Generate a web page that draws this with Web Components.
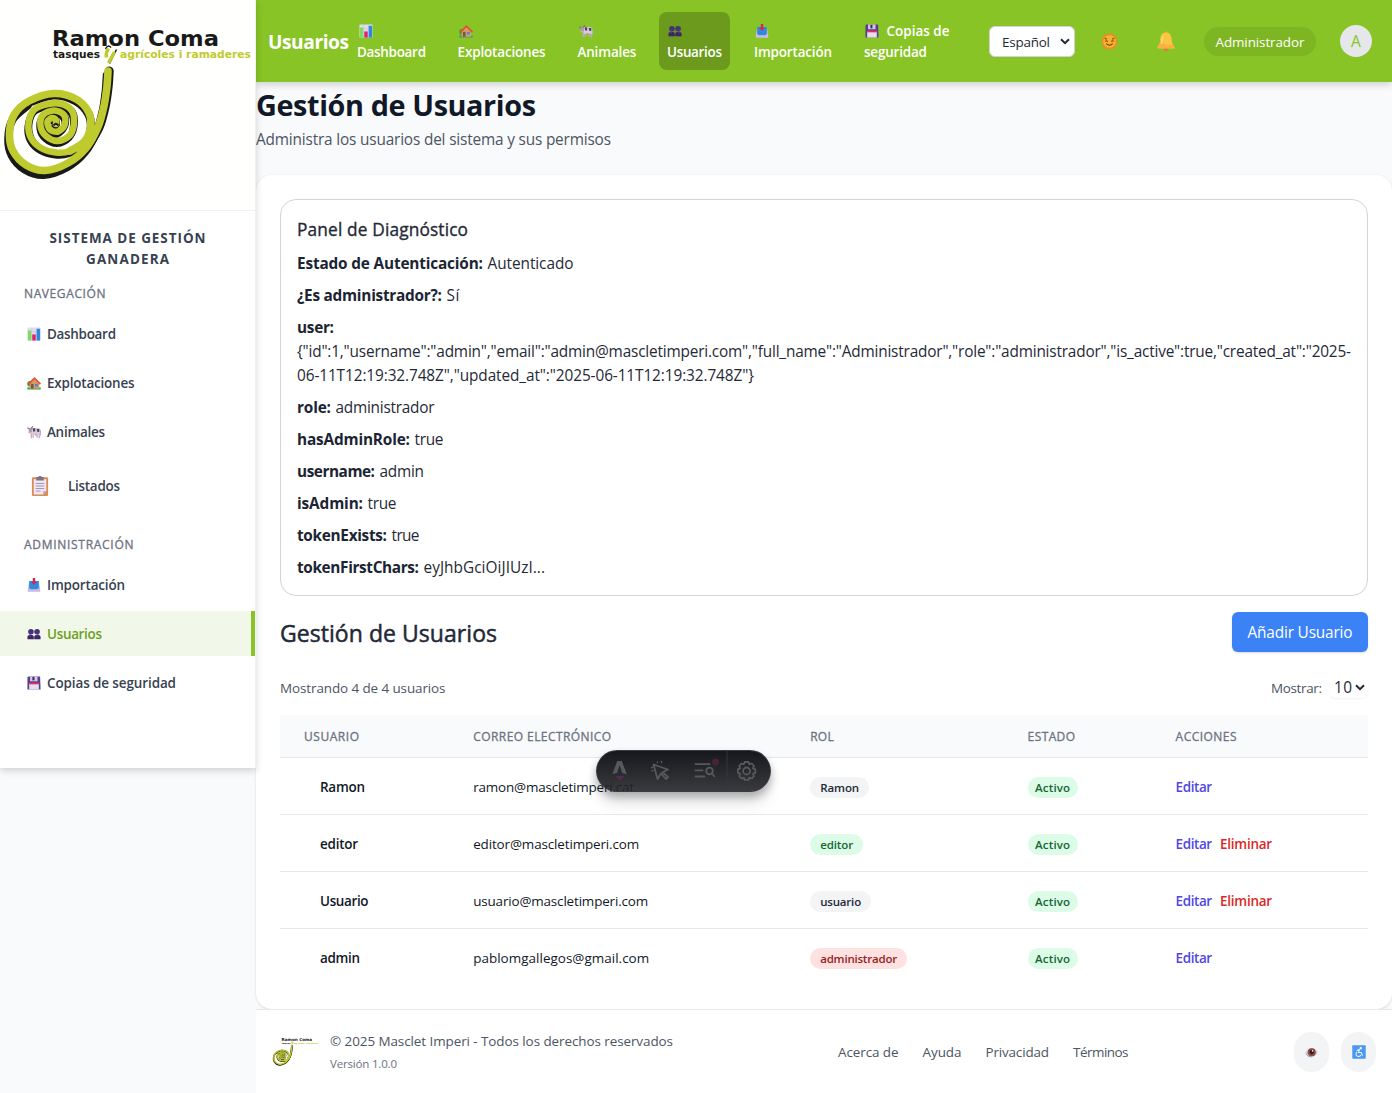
<!DOCTYPE html>
<html lang="es">
<head>
<meta charset="utf-8">
<title>Gestión de Usuarios</title>
<style>
html,body{margin:0;padding:0}
body{font-family:"Open Sans","Noto Sans",sans-serif;font-size:16px;line-height:24px;color:#1f2937;background:#f9fafc;width:1392px;height:1093px;overflow:hidden}
</style>
</head>
<body>
<app-shell></app-shell>
<script>
const define=(name,html,setup)=>customElements.define(name,class extends HTMLElement{
  connectedCallback(){
    if(this.shadowRoot)return;
    const root=this.attachShadow({mode:'open'});
    root.innerHTML=typeof html==='function'?html(this):html;
    if(setup)setup(this,root);
  }
});

const ICONS={
bars:`<rect x=".5" y=".5" width="15" height="15" rx="1" fill="#e3dcee"/><path d="M5.5 1v14M10.5 1v14M1 5.5h14" stroke="#c9bfd8" stroke-width=".6"/><rect x="1" y="4" width="4" height="11.5" fill="#7fdc62"/><rect x="6" y="8.5" width="4" height="7" fill="#e0246a"/><rect x="11" y="2" width="4" height="13.500" fill="#2f86e0"/>`,
house:`<circle cx="3.500" cy="9" r="3.200" fill="#3d9a4c"/><rect x=".3" y="13" width="15.400" height="2.500" fill="#35a85c"/><path d="M3 8.500 8.500 3.500 14 8.500V14.500H3z" fill="#d99a6a"/><path d="M1.500 9.500 8.500 2.500 15.300 9.300" fill="none" stroke="#e2542c" stroke-width="2"/><rect x="4.500" y="9" width="3" height="5.500" fill="#8a5236"/><rect x="9" y="9" width="3.400" height="3" fill="#3d8edb"/>`,
cow:`<path d="M5 9v6M7 9v5.500M11.500 9v5.500M14 8v7M13.500 4.500 15.500 7v5" fill="none" stroke="#bdaec6" stroke-width="1.500"/><path d="M4 3.500h9.500l1.300 2v5.500H6L4.500 8z" fill="#d7cbdd"/><rect x="2" y="3" width="3.500" height="6" rx="1.500" fill="#a697b0"/><path d="M6.500 3.700h2.800v3.800H7zM11 4.500h3v3.500h-2z" fill="#4b4054"/><path d="M2 4.500 .5 3M5 4l1.500-2.500" stroke="#6d6077" stroke-width="1.200"/><rect x="1.700" y="7.500" width="3" height="2" rx="1" fill="#e6a1b8"/><rect x="9" y="10.500" width="2" height="1.500" fill="#ef7794"/>`,
clip:`<rect x="1.500" y="1" width="13" height="15" rx="1" fill="#db8c56"/><path d="M3 2.500h10V12l-2.500 2.700H3z" fill="#eee8f5"/><path d="M10.500 14.700V12H13z" fill="#b9a9cf"/><path d="M5 .7h1.700a1.400 1.400 0 0 1 2.600 0H11V3.500H5z" fill="#7c7188"/><path d="M4.500 6h7M4.500 8h7M4.500 10h7M4.500 12h4" stroke="#a396b5" stroke-width=".8"/>`,
inbox:`<path d="M2.500 4h11l1.500 8v3.500H1V12z" fill="#c9b8e6"/><path d="M2.500 3.500h11V11l-2 2h-7l-2-2z" fill="#2c8bdd"/><path d="M1 13h14v2.500H1z" fill="#cbb9e4"/><path d="M6.600 0h2.800v4.500h2L8 7.800 4.700 4.500h1.900z" fill="#dd2450"/>`,
people:`<circle cx="4.500" cy="5.500" r="3.200" fill="#463079"/><circle cx="11.500" cy="5.500" r="3.200" fill="#463079"/><path d="M.5 14v-3Q.5 9 3 9h2.500q2.300 0 2.300 2v3zM8.300 14v-3q0-2 2.500-2H13q2.500 0 2.500 2v3z" fill="#392566"/><path d="M3.500 6v5M12.500 6v5" stroke="#5b3d8d" stroke-width="1.200"/>`,
floppy:`<path d="M1.500.5H15L15.500 15.500H.5V1.500z" fill="#57408c"/><rect x="3.500" y=".5" width="8.500" height="5.500" fill="#d3c8df"/><rect x="6.200" y="1" width="2.300" height="4" fill="#392861"/><rect x="2.500" y="8" width="11" height="7.500" fill="#e8dcef"/><rect x="2.500" y="7.500" width="11" height="2" fill="#e52b5f"/>`,
sun:`<path d="M8 0 9.700 1.500 12 .8 12.800 3 15 3.800 14.500 6.200 16 8 14.500 9.800 15 12.200 12.800 13 12 15.200 9.700 14.500 8 16 6.300 14.500 4 15.200 3.200 13 1 12.200 1.500 9.800 0 8 1.500 6.200 1 3.800 3.200 3 4 .8 6.300 1.500z" fill="#f08a24"/><circle cx="8" cy="8" r="5.900" fill="#f9b22c"/><path d="M3.500 5l2 .8M10.500 5.800l2-.8M4 8q1.200-1.300 2.400 0M9.600 8q1.200-1.300 2.400 0M5 10q3 3 6 0" fill="none" stroke="#6b3d24" stroke-width="1"/>`,
bell:`<circle cx="8" cy="14.500" r="1.500" fill="#e8743b"/><circle cx="8" cy="1.500" r="1.300" fill="#f4a62a"/><path d="M8 1.200c3.200 0 4.300 2.300 4.600 5.300.2 2.800.8 4.500 2.400 6.500v1H1v-1c1.600-2 2.200-3.700 2.400-6.500C3.700 3.500 4.800 1.200 8 1.200z" fill="#fcc443"/><path d="M3.400 7.500C3.200 9.800 2.600 11 1 13v1h14v-1q-1-1.300-1.500-2.500-5 2.500-10.100-3z" fill="#f79a3d" opacity=".5"/><path d="M5.500 4.500q-.6 3-1.200 6" stroke="#ffdf7d" stroke-width="1.200" fill="none"/>`,
eye:`<path d="M.2 8.500Q3.500 2.500 8 2.500T15.800 8Q12 13.800 7.500 13.800T.2 8.500z" fill="#d3c6df"/><path d="M1.500 10Q4 13.500 8 13.500" stroke="#a590bb" fill="none" stroke-width="1.200"/><circle cx="8.300" cy="7.800" r="4.900" fill="#8a4a3d"/><circle cx="8.300" cy="7.500" r="2.600" fill="#2c1a22"/><circle cx="9.300" cy="6" r="1" fill="#f7eef2"/>`,
wheel:`<rect x=".3" y=".3" width="15.400" height="15.400" rx="1" fill="#4a98f2"/><circle cx="10" cy="3.700" r="1.300" fill="#fff"/><path d="M5.500 6.300 8.500 5 7.500 8.500h3l1.500 3.800M6 8a2.800 2.800 0 1 0 4 3.500" fill="none" stroke="#e9f3ff" stroke-width="1.200"/>`
};
define('ui-emoji',el=>`<style>:host{display:inline-block;flex:none;width:${el.getAttribute('size')||14}px;height:${el.getAttribute('size')||14}px}svg{display:block;width:100%;height:100%}</style><svg viewBox="0 0 16 16">${ICONS[el.getAttribute('name')]}</svg>`);

/* Centre line of the snail-shaped trademark, from the handle inwards */
const SHELL=[[108,71],[107,86],[104,106],[98,127],[86,148],[68,163],[45,170.500],[26,165],[13,151],[9.500,134],[14,115],[29,101],[54,93.500],[76,99],[88.500,112],[90.500,127],[84,142],[70,151],[56,152.500],[41,148],[31,138],[28.500,124],[34,110],[48,104],[62,104],[72,111],[74,123],[70,135],[58,141],[46,136],[40.500,126],[43,115],[54,110.500],[64,115],[64.500,125],[58,131.500],[50,129.500],[47.500,122],[52,118],[56,120],[56,124]];
function smooth(p){
  let d=`M${p[0]}`;
  for(let i=0;i<p.length-1;i++){
    const a=p[i-1]||p[i],b=p[i],c=p[i+1],e=p[i+2]||c;
    d+=`C${b[0]+(c[0]-a[0])/6} ${b[1]+(c[1]-a[1])/6} ${c[0]-(e[0]-b[0])/6} ${c[1]-(e[1]-b[1])/6} ${c[0]} ${c[1]}`;
  }
  return d;
}
define('brand-logo',`<style>:host{display:block}svg{display:block;width:100%;height:100%}text{font-family:"DejaVu Sans",sans-serif;font-weight:700}</style>
<svg viewBox="0 0 256 210"><g fill="none" stroke-linecap="round" stroke-linejoin="round">
<path d="${smooth(SHELL.slice(0,12))}" stroke="#191a18" stroke-width="8" transform="translate(-1.300 4.500)"/>
<path d="${smooth(SHELL.slice(0,5))}" stroke="#191a18" stroke-width="9" transform="translate(1.200 0)"/>
<path d="${smooth(SHELL.slice(11))}" stroke="#191a18" stroke-width="6.500" transform="translate(-.8 2.800)"/>
<path d="${smooth(SHELL.slice(11))}" stroke="#191a18" stroke-width="6" transform="translate(.9 .8)"/>
<path d="${smooth(SHELL.slice(0,18))}" stroke="#bfca2f" stroke-width="7.600"/>
<path d="${smooth(SHELL.slice(16))}" stroke="#bfca2f" stroke-width="6.600"/>
<path d="M54 125q1.500-2.500 4 0" stroke="#191a18" stroke-width="1.800"/></g>
<text x="52" y="46" font-size="22" textLength="167" lengthAdjust="spacingAndGlyphs" fill="#191a18">Ramon Coma</text>
<text x="53" y="57.500" font-size="10.500" textLength="47" lengthAdjust="spacingAndGlyphs" fill="#191a18">tasques</text>
<text x="120" y="57.500" font-size="10.500" textLength="131" lengthAdjust="spacingAndGlyphs" fill="#bfca2f">agrícoles i ramaderes</text>
<path d="M105.500 49q2.500-5 5.500-1.500M116.500 49.500l-7 14" fill="none" stroke="#191a18" stroke-width="1.500"/>
<path d="M108.500 48.500q-3 4-2 9M114.500 52l-6 11" fill="none" stroke="#bfca2f" stroke-width="3.600"/></svg>`);

define('nav-item',el=>`<style>
:host{display:block;box-sizing:border-box;flex:none;padding:8px;border-radius:8px;color:#fff;font-size:14px;line-height:21px;font-weight:600}
:host([active]){background:#6b9a1d}.t{display:flex;align-items:center;height:21px;padding-left:1.500px}.b{height:21px}.c{margin-left:7px}
</style><div class="t"><ui-emoji name="${el.getAttribute('icon')}"></ui-emoji><span class="c"><slot name="first"></slot></span></div><div class="b"><slot></slot></div>`);

define('ui-select',`<style>:host{display:flex;align-items:center;box-sizing:border-box;background:#fff;border-radius:6px}svg{width:10px;height:7px;margin-left:auto}</style><slot></slot><svg viewBox="0 0 10 7"><path d="M1 1.200 5 5.200 9 1.200" fill="none" stroke="#1f2937" stroke-width="2"/></svg>`);

define('app-header',`<style>
:host{display:flex;align-items:center;height:82px;box-sizing:border-box;padding-left:12px;background:#88c425;color:#fff;box-shadow:0 3px 7px rgba(0,0,0,.16);position:relative}
.title{width:81px;font-size:20px;font-weight:700;line-height:28px;flex:none}
nav{display:flex;gap:16px}
.lang{width:86px;height:31px;margin-left:16px;border:1px solid #d1d5db;padding:0 4px 0 12px;font-size:14px;color:#1f2937}
.sun{margin-left:26px}.bell{margin-left:38px}
.role{display:flex;justify-content:center;align-items:center;width:112px;height:29px;margin-left:28px;border-radius:15px;background:#7eb522;font-size:14px}
.av{display:flex;justify-content:center;align-items:center;width:32px;height:32px;margin-left:24px;border-radius:50%;background:#e5e7eb;color:#88c425;font-size:15.500px}
</style>
<div class="title"><fit-text w="81">Usuarios</fit-text></div>
<nav><nav-item icon="bars" style="width:84.600px"><fit-text w="69">Dashboard</fit-text></nav-item>
<nav-item icon="house" style="width:103.800px"><fit-text w="88">Explotaciones</fit-text></nav-item>
<nav-item icon="cow" style="width:73.600px"><fit-text w="59">Animales</fit-text></nav-item>
<nav-item icon="people" active style="width:71px"><fit-text w="55">Usuarios</fit-text></nav-item>
<nav-item icon="inbox" style="width:94px"><fit-text w="78">Importación</fit-text></nav-item>
<nav-item icon="floppy" style="width:117px"><fit-text slot="first" w="63">Copias de</fit-text><fit-text w="63">seguridad</fit-text></nav-item></nav>
<ui-select class="lang"><fit-text w="48">Español</fit-text></ui-select>
<ui-emoji class="sun" name="sun" size="17"></ui-emoji><ui-emoji class="bell" name="bell" size="20"></ui-emoji>
<div class="role"><fit-text w="89">Administrador</fit-text></div><div class="av">A</div>`);

define('side-item',el=>`<style>
:host{display:flex;align-items:center;box-sizing:border-box;height:45px;margin-bottom:4px;padding-left:26.500px;font-size:14px;font-weight:600;color:#374151}
:host([active]){background:#f2f8e9;border-right:4px solid #88c425;color:#6ba01f}
:host([large]){height:55px;padding-left:30px;margin-bottom:0}slot{display:block;margin-left:6.500px}:host([large]) slot{margin-left:18px}
</style><ui-emoji name="${el.getAttribute('icon')}" size="${el.hasAttribute('large')?20:14}"></ui-emoji><slot></slot>`);

define('app-sidebar',`<style>
:host{display:block;box-sizing:border-box;width:256px;height:768px;background:#fff;border-right:1px solid #f0f1f3;box-shadow:0 3px 7px rgba(0,0,0,.16);position:relative;z-index:2}
.logo{height:210px;border-bottom:1px solid #f0f1f3;background:#fffffe}brand-logo{width:256px;height:210px}
.name{display:flex;flex-direction:column;align-items:center;padding-top:16px;font-size:14px;font-weight:700;line-height:21px;color:#374151}
.cap{height:20px;padding-left:24px;font-size:12.500px;line-height:20px;color:#6b7280;-webkit-text-stroke:.3px #6b7280}
.a{margin:15px 0 7px}.b{margin:22px 0 7px}
</style><div class="logo"><brand-logo></brand-logo></div>
<div class="name"><fit-text w="156">SISTEMA DE GESTIÓN</fit-text><fit-text w="83">GANADERA</fit-text></div>
<div class="cap a"><fit-text w="81.500">NAVEGACIÓN</fit-text></div>
<side-item icon="bars"><fit-text w="69">Dashboard</fit-text></side-item>
<side-item icon="house"><fit-text w="87.500">Explotaciones</fit-text></side-item>
<side-item icon="cow"><fit-text w="58">Animales</fit-text></side-item>
<side-item icon="clip" large><fit-text w="52">Listados</fit-text></side-item>
<div class="cap b"><fit-text w="109.500">ADMINISTRACIÓN</fit-text></div>
<side-item icon="inbox"><fit-text w="78">Importación</fit-text></side-item>
<side-item icon="people" active><fit-text w="55">Usuarios</fit-text></side-item>
<side-item icon="floppy"><fit-text w="129">Copias de seguridad</fit-text></side-item>`);

define('diag-line',el=>`<style>:host{display:block;margin-top:8px;line-height:24px}.r{display:flex;gap:4.500px}b{display:block;font-weight:700;color:#1b2533}</style><div class="r"><b><fit-text w="${el.getAttribute('kw')}">${el.getAttribute('k')}</fit-text></b><slot></slot></div><slot name="more"></slot>`);
define('diag-panel',`<style>:host{display:block;box-sizing:border-box;height:397px;border:1px solid #d1d5db;border-radius:16px;padding:15px 16px}h3{margin:0;font-size:18px;line-height:28px;font-weight:400;-webkit-text-stroke:.35px #1f2937;color:#1f2937}.m{display:block}</style>
<h3><fit-text w="171">Panel de Diagnóstico</fit-text></h3>
<diag-line k="Estado de Autenticación:" kw="186"><fit-text w="86">Autenticado</fit-text></diag-line>
<diag-line k="¿Es administrador?:" kw="145"><fit-text w="13">Sí</fit-text></diag-line>
<diag-line k="user:" kw="37"><div class="m" slot="more"><fit-text w="1054">{"id":1,"username":"admin","email":"admin@mascletimperi.com","full_name":"Administrador","role":"administrador","is_active":true,"created_at":"2025-</fit-text><fit-text w="457">06-11T12:19:32.748Z","updated_at":"2025-06-11T12:19:32.748Z"}</fit-text></div></diag-line>
<diag-line k="role:" kw="34"><fit-text w="99">administrador</fit-text></diag-line>
<diag-line k="hasAdminRole:" kw="113"><fit-text w="29">true</fit-text></diag-line>
<diag-line k="username:" kw="78"><fit-text w="44.500">admin</fit-text></diag-line>
<diag-line k="isAdmin:" kw="66"><fit-text w="29">true</fit-text></diag-line>
<diag-line k="tokenExists:" kw="90"><fit-text w="28">true</fit-text></diag-line>
<diag-line k="tokenFirstChars:" kw="122"><fit-text w="121.500">eyJhbGciOiJIUzI...</fit-text></diag-line>`);

define('ui-badge',`<style>:host{display:inline-flex;justify-content:center;align-items:center;height:20px;padding-top:1px;border-radius:11px;font-size:12px;line-height:20px;font-weight:600;background:#f3f4f6;color:#1f2937}:host([tone=green]){background:#dcfce7;color:#166534}:host([tone=red]){background:#fee2e2;color:#991b1b}</style><slot></slot>`);

const COLS='grid-template-columns:169.200px 337px 217.400px 148px 1fr';
define('user-row',el=>{const g=n=>(el.getAttribute(n)||'').split('|');
const n=g('name'),m=g('mail'),r=g('role');return `<style>
:host{display:grid;${COLS};align-items:center;height:56px;border-bottom:1px solid #e5e7eb;font-size:14px;color:#111827}
:host([last]){border-color:transparent}div{padding-left:24px;display:flex;gap:8px}.n{padding-left:40px}.n,.x{font-weight:600}.x{color:#4f46e5}.d{color:#dc2626}.g{padding-top:2px}
</style><div class="n"><fit-text w="${n[1]}">${n[0]}</fit-text></div><div><fit-text w="${m[1]}">${m[0]}</fit-text></div>
<div class="g"><ui-badge tone="${r[2]}" style="width:${+r[1]+20}px"><fit-text w="${r[1]}">${r[0]}</fit-text></ui-badge></div>
<div class="g"><ui-badge tone="green" style="width:50px"><fit-text w="35">Activo</fit-text></ui-badge></div>
<div class="x"><fit-text w="36.500">Editar</fit-text>${el.hasAttribute('del')?'<span class="d"><fit-text w="52">Eliminar</fit-text></span>':''}</div>`});
define('user-table',`<style>:host{display:block}.h{display:grid;${COLS};align-items:center;height:43px;padding-top:1px;box-sizing:border-box;border-bottom:1px solid #e5e7eb;background:#f9fafc;font-size:12.500px;-webkit-text-stroke:.3px #6b7280;color:#6b7280}.h>*{margin-left:24px}</style>
<div class="h"><fit-text w="55">USUARIO</fit-text><fit-text w="138">CORREO ELECTRÓNICO</fit-text><fit-text w="23.500">ROL</fit-text><fit-text w="47.500">ESTADO</fit-text><fit-text w="61">ACCIONES</fit-text></div>
<user-row name="Ramon|45" mail="ramon@mascletimperi.cat|161" role="Ramon|39|gray"></user-row>
<user-row name="editor|38" mail="editor@mascletimperi.com|166" role="editor|33|green" del></user-row>
<user-row name="Usuario|48.500" mail="usuario@mascletimperi.com|175" role="usuario|41|gray" del></user-row>
<user-row name="admin|40" mail="pablomgallegos@gmail.com|176" role="administrador|77|red" last></user-row>`);

define('users-card',`<style>
:host{display:block;box-sizing:border-box;height:834px;padding:24px;background:#fff;border-radius:16px;box-shadow:0 1px 3px rgba(0,0,0,.13)}
.bar{display:flex;justify-content:space-between;align-items:center;margin-top:16px;height:40px}
h2{margin:1px 0 0;font-size:24px;line-height:32px;font-weight:400;-webkit-text-stroke:.5px #1f2937;color:#1f2937}
.btn{display:flex;justify-content:center;align-items:center;width:136px;height:40px;border-radius:6px;background:#3b82f6;color:#fff;box-shadow:0 1px 2px rgba(0,0,0,.15)}
.sub{display:flex;align-items:center;height:32px;margin:19px 0 12px;font-size:14px;color:#4b5563}.sub .l{margin-left:auto;margin-right:8px}
.pg{width:38px;height:22px;padding:0 3px 0 4px;font-size:16px;color:#1f2937;box-shadow:0 1px 2px rgba(0,0,0,.05)}
</style><diag-panel></diag-panel>
<div class="bar"><h2><fit-text w="217">Gestión de Usuarios</fit-text></h2><div class="btn"><fit-text w="105">Añadir Usuario</fit-text></div></div>
<div class="sub"><fit-text w="165.500">Mostrando 4 de 4 usuarios</fit-text><span class="l"><fit-text w="51">Mostrar:</fit-text></span><ui-select class="pg"><fit-text w="18">10</fit-text></ui-select></div>
<user-table></user-table>`);

define('app-footer',`<style>
:host{display:flex;align-items:center;box-sizing:border-box;height:84px;border-top:1px solid #e5e7eb;background:#fff;padding:1px 16px 0;color:#4b5563;font-size:14px}
brand-logo{width:47px;height:38.500px;margin:1px 11px 0 0;flex:none}.c{display:flex;flex-direction:column;width:343px}.v{font-size:12px;color:#6b7280}
.l{display:flex;gap:24px;margin:-2px 0 0 165px}.b{display:flex;gap:12px;margin-left:auto}.b div{display:flex;align-items:center;justify-content:center;width:35px;height:40px;border-radius:18px;background:#f3f4f6}
</style><brand-logo></brand-logo><div class="c"><fit-text w="343">© 2025 Masclet Imperi - Todos los derechos reservados</fit-text><span class="v"><fit-text w="67">Versión 1.0.0</fit-text></span></div>
<div class="l"><fit-text w="60.500">Acerca de</fit-text><fit-text w="39">Ayuda</fit-text><fit-text w="63.500">Privacidad</fit-text><fit-text w="55.500">Términos</fit-text></div>
<div class="b"><div><ui-emoji name="eye" size="13"></ui-emoji></div><div><ui-emoji name="wheel" size="14"></ui-emoji></div></div>`);

define('dev-toolbar',`<style>
:host{position:absolute;left:595.500px;top:750px;z-index:5;display:flex;box-sizing:border-box;width:175px;height:42px;border-radius:21px;border:1px solid rgba(58,61,70,.95);background:linear-gradient(180deg,rgba(19,21,26,.99),rgba(36,37,41,.9));box-shadow:0 5px 9px rgba(19,21,26,.3),0 13px 14px rgba(19,21,26,.09)}
svg{display:block;width:173px;height:40px}
</style><svg viewBox="597 751 173 40" fill="none" stroke="#58595d" stroke-width="1.800" stroke-linecap="round" stroke-linejoin="round">
<path d="M727 751v40" stroke="#35373d" stroke-width="1"/>
<path d="M612.300 774.500 617.200 761h4.600L626.900 774.500Q624 773 622.200 773L619.600 765.300 617 773Q614.500 773.300 612.300 774.500z" fill="#58595d" stroke="none"/>
<path d="M616 775.500q3.500 1.700 7.500 0 0 2.500-2 3.300l-1.700 2-1.500-2q-2.300-1-2.300-3.300z" fill="#582a52" stroke="none"/>
<path d="M653.500 764.500 668 769.500 662.500 772.300 668 777 666 779 661 773.500 657.500 779z"/><path d="M657.500 762v.5M661.500 761.500v1M651.500 767.500h1M652 771l.8-.4" stroke-width="1.400"/>
<path d="M695.500 764.200h14M695.500 770.400h7M695.500 776.500h9"/><circle cx="709.500" cy="771" r="3.300"/><path d="m712 773.500 2.300 2.800"/><circle cx="715.500" cy="762" r="3.500" fill="#492335" stroke="none"/>
<path d="M744.700 762h3.800l.8 2.300 2.500-.8 2.200 2.500-1 2.300 2.300 1v3.500l-2.300 1 1 2.300-2.200 2.400-2.500-.9-.8 2.300h-3.800l-.8-2.300-2.500.9-2.200-2.400 1-2.300-2.300-1v-3.500l2.300-1-1-2.300 2.200-2.500 2.500.8z"/><circle cx="746.600" cy="771" r="3.500"/></svg>`);

define('app-shell',`<style>
:host{display:flex;align-items:flex-start;width:1392px;height:1093px;position:relative}
main{width:1136px;display:flex;flex-direction:column}
h1{margin:3px 0 0;height:39px;font-size:30px;line-height:37px;font-weight:700;color:#111827}p{margin:3px 0 25px;height:23px;line-height:23px;color:#4b5563}
</style><app-sidebar></app-sidebar><main><app-header></app-header><h1><fit-text w="280">Gestión de Usuarios</fit-text></h1><p><fit-text w="355">Administra los usuarios del sistema y sus permisos</fit-text></p><users-card></users-card><app-footer></app-footer></main><dev-toolbar></dev-toolbar>`);

/* Text run with a set width: the remaining space is shared out between its letters */
define('fit-text',`<style>:host{display:block;white-space:nowrap;font-size:.96em}span{display:inline-block;vertical-align:top;padding-top:.04em}</style><span><slot></slot></span>`,(el,root)=>{
  const s=root.querySelector('span'),w=+el.getAttribute('w'),n=el.textContent.length;
  s.style.letterSpacing='0px';
  s.style.letterSpacing=(w-s.getBoundingClientRect().width)/Math.max(1,n-1)+'px';
  el.style.width=w+'px';
  el.style.height='1lh';
});
</script>
</body>
</html>
